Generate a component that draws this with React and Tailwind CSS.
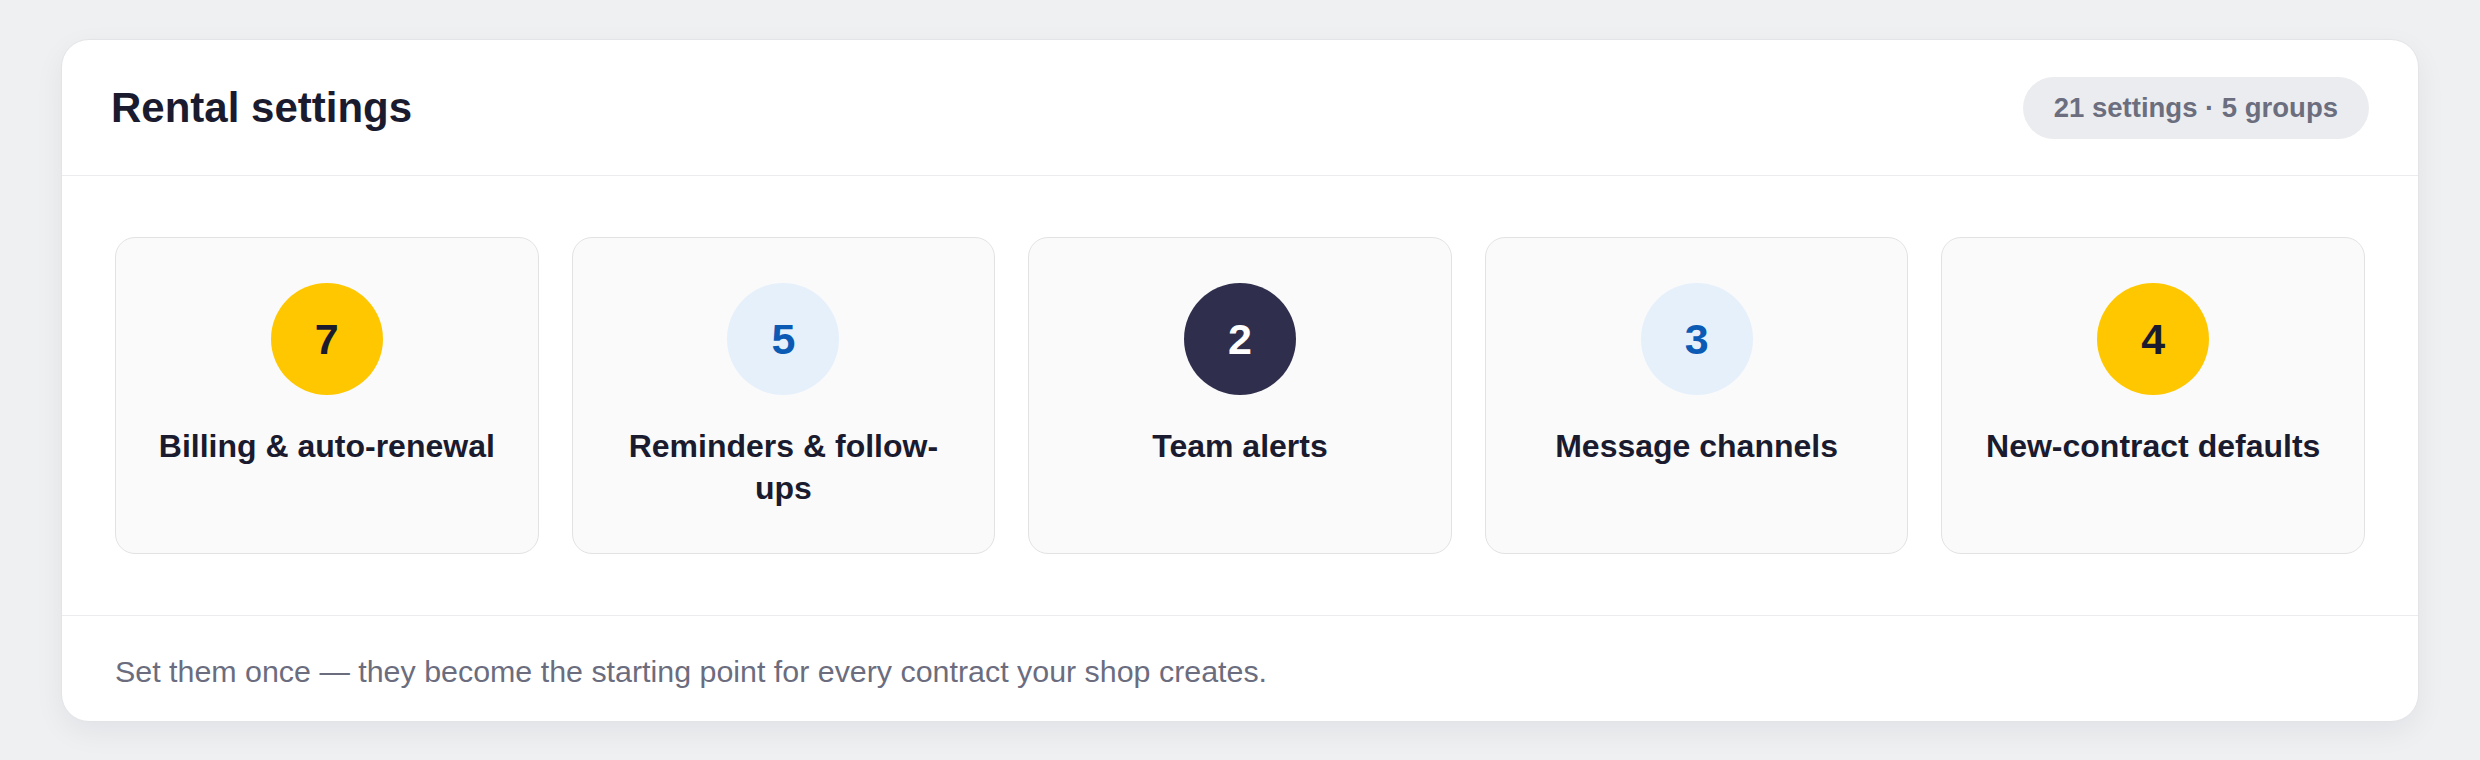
const groups = [
  { count: 7, label: "Billing & auto-renewal", tone: "yellow" },
  { count: 5, label: "Reminders & follow-ups", tone: "blue" },
  { count: 2, label: "Team alerts", tone: "navy" },
  { count: 3, label: "Message channels", tone: "blue" },
  { count: 4, label: "New-contract defaults", tone: "yellow" },
];

const toneClass = {
  yellow: "bg-[#ffc700] text-[#1a1b2e]",
  blue: "bg-[#e6f0fb] text-[#0b5bb5]",
  navy: "bg-[#2f2f4d] text-white",
};

const GroupTile = ({ count, label, tone }) => {
  return (
    <div className="flex flex-col items-center rounded-[20px] border border-[#e2e2e4] bg-[#fafafa] px-[36px] pt-[45px] pb-[44px]">
      <div
        className={
          "flex h-[112px] w-[112px] items-center justify-center rounded-full text-[43px] font-bold leading-none " +
          toneClass[tone]
        }
      >
        {count}
      </div>
      <p className="mt-[30px] text-center text-[32px] font-bold leading-[42px] text-[#1a1b2e]">
        {label}
      </p>
    </div>
  );
};

export default function App() {
  return (
    <div
      className="min-h-[760px] bg-[#eff0f2] px-[61px] pt-[39px] pb-[40px]"
      style={{ fontFamily: '"Liberation Sans", Arial, sans-serif' }}
    >
      <div className="overflow-hidden rounded-[28px] border border-[#e3e4e7] bg-white shadow-[0_10px_30px_rgba(20,24,40,0.06)]">
        {/* header */}
        <div className="flex h-[136px] items-center justify-between border-b border-[#ececee] px-[49px]">
          <h1 className="text-[42px] font-bold leading-none text-[#1a1b2e]">
            Rental settings
          </h1>
          <span className="flex h-[62px] items-center rounded-full bg-[#ebecef] px-[31px] text-[27.5px] font-bold text-[#6b6e7e]">
            21 settings · 5 groups
          </span>
        </div>

        {/* groups */}
        <div className="grid grid-cols-5 gap-[33px] border-b border-[#ececee] px-[53px] py-[61px]">
          {groups.map((g) => (
            <GroupTile key={g.label} {...g} />
          ))}
        </div>

        {/* footer */}
        <div className="flex h-[105px] items-center px-[53px] pt-[5px]">
          <p className="text-[30.4px] leading-none text-[#6b6d7e]">
            Set them once — they become the starting point for every contract your shop creates.
          </p>
        </div>
      </div>
    </div>
  );
}
